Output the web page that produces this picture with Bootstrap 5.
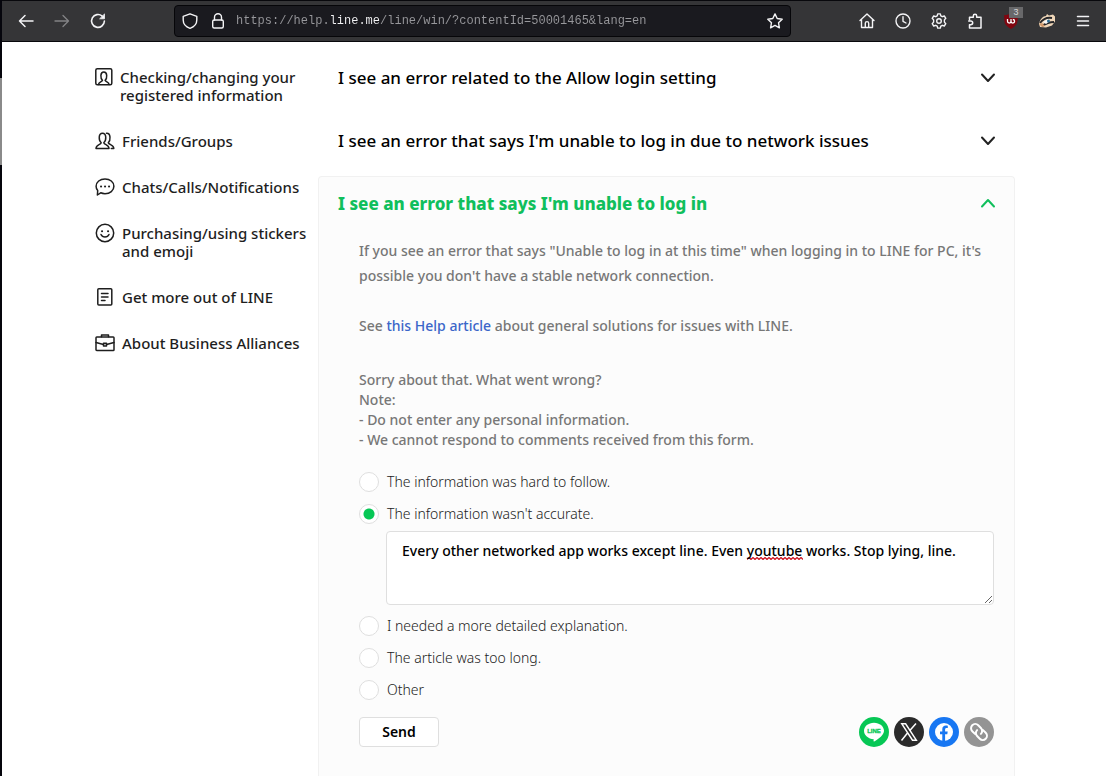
<!DOCTYPE html>
<html lang="en">
<head>
<meta charset="utf-8">
<meta name="viewport" content="width=device-width, initial-scale=1">
<title>LINE Help Center</title>
<link href="https://cdn.jsdelivr.net/npm/bootstrap@5.3.0/dist/css/bootstrap.min.css" rel="stylesheet">
<style>
  body { font-family: "Noto Sans", sans-serif; font-weight: 500; font-size: 14px; color: #1e1e1e; background: #fff; overflow: hidden; }
  button, a, input, textarea { font-family: inherit; }
  svg { display: block; }
  .line-svg { fill: none; stroke: currentColor; stroke-linecap: round; stroke-linejoin: round; }

  .desk-edge { width: 2px; background: linear-gradient(#05050c 78px, #8a8a8a 78px 165px, #05050c 165px); }

  /* Browser toolbar */
  .toolbar { height: 42px; padding: 0 5px 0 6px; background: #353537; border-top: 1px solid #08080c; border-bottom: 1px solid #08080c; color: #f4f4f6; }
  .tool { width: 36px; height: 32px; padding: 0; border: 0; background: none; color: inherit; display: grid; place-items: center; position: relative; }
  .tool:disabled { color: #838385; }
  .tool-star { width: 30px; }
  .urlbar { height: 32px; margin: 0 58px; padding-left: 7px; background: #1a1a1f; border: 1px solid #060609; border-radius: 4px; }
  .lock { margin: 0 10px 0 12px; }
  .url-box { border: 0; outline: 0; padding: 0; font: 400 12px/20px "Liberation Mono", monospace; color: transparent;
    background: linear-gradient(90deg, #98989c 13ch, #f4f4f6 13ch 20ch, #98989c 20ch); -webkit-background-clip: text; background-clip: text; }
  .count { position: absolute; top: 2px; right: 6px; width: 14px; height: 11px; background: #68686a; color: #d8d8da; font: 400 9px/11px "Liberation Sans", sans-serif; }

  /* Page */
  .page-wrap { max-width: 922px; }
  .side { width: 225px; padding-top: 26px; gap: 28px; font-size: 15px; line-height: 18px; }
  .side a { color: inherit; text-decoration: none; gap: 7px; padding-left: 2px; padding-right: 8px; }
  .side svg { flex: none; }
  .faq { padding-top: 4px; min-width: 0; }
  .faq-head { width: 100%; border: 0; background: none; padding: 0 18px 0 20px; height: 63px; font-size: 17px; line-height: 24px; font-weight: 500; color: #000; text-align: left; }
  .faq-head svg { color: #222; }
  .faq-open { margin-top: 4px; background: #fcfcfc; border: 1px solid #f1f1f1; border-bottom: 0; border-radius: 4px 4px 0 0; min-height: 600px; }
  .faq-open .faq-head { height: 53px; font-weight: 800; color: #10bf5c; padding-left: 19px; padding-right: 17px; }
  .faq-open .faq-head svg { color: #10bf5c; }
  .faq-body { padding: 8px 20px 30px 40px; color: #777; }
  .faq-body p { line-height: 25px; margin-bottom: 25px; }
  .faq-body p a { color: #3b66c9; text-decoration: none; }
  .note { line-height: 20px; margin: 32px 0 22px; }
  .choice { gap: 8px; height: 20px; margin-bottom: 12px; }
  .choice label { font-weight: 300; line-height: 20px; color: #222; }
  .choice input { appearance: none; width: 20px; height: 20px; margin: 0; border: 1px solid #dfdfdf; border-radius: 50%; background: #fff; }
  .choice input:checked { background: radial-gradient(circle, #06c755 5px, #fff 6px); }
  .reply { display: block; width: calc(100% - 27px); height: 74px; margin: -5px 0 11px 27px; padding: 9px 15px; border: 1px solid #dfdfdf; border-radius: 4px; outline: 0; font-weight: 500; line-height: 20px; color: #000; background-color: #fff;
    background-repeat: no-repeat; background-size: 56px 3px; background-position: 360px 25px;
    background-image: url("data:image/svg+xml,%3Csvg xmlns='http://www.w3.org/2000/svg' width='56' height='3'%3E%3Cpath d='M0 2.5l2-2 2 2 2-2 2 2 2-2 2 2 2-2 2 2 2-2 2 2 2-2 2 2 2-2 2 2 2-2 2 2 2-2 2 2 2-2 2 2 2-2 2 2 2-2 2 2 2-2 2 2 2-2 2 2' fill='none' stroke='%23d01c28' stroke-width='1.3'/%3E%3C/svg%3E"); }
  .form-end { margin-top: 17px; }
  .share { gap: 5px; }
  .send { width: 80px; height: 30px; border: 1px solid #dfdfdf; border-radius: 4px; background: #fff; color: #000; font-weight: 600; line-height: 20px; padding: 0; }
</style>
</head>
<body class="d-flex vh-100">
<div class="desk-edge flex-shrink-0"></div>
<div class="flex-fill">
  <header class="toolbar d-flex align-items-center">
    <button class="tool" aria-label="Back"><svg class="line-svg" width="16" height="16" stroke-width="1.5"><path d="M15 8H1.5M7 2.5 1.5 8 7 13.500"/></svg></button>
    <button class="tool" aria-label="Forward" disabled><svg class="line-svg" width="16" height="16" stroke-width="1.3"><path d="M1 8h13.500M9 2.500 14.500 8 9 13.500"/></svg></button>
    <button class="tool" aria-label="Reload"><svg class="line-svg" width="16" height="16" stroke-width="1.6"><path d="M12.200 3.100A6.400 6.400 0 1 0 14.400 8"/><path d="M14.500 1.300v4.500H10z" fill="currentColor" stroke-width=".8"/></svg></button>
    <div class="urlbar d-flex align-items-center flex-fill">
      <svg class="line-svg" width="16" height="16" stroke-width="1.400"><path d="M8 .8 1.200 3.300V7c0 4.200 3 7 6.800 8.300C11.800 14 14.800 11.200 14.800 7V3.300z"/></svg>
      <svg class="line-svg lock" width="16" height="16" stroke-width="1.400"><rect x="2.700" y="7" width="10.600" height="8" rx="1.500"/><path d="M4.500 7V4.300a3.500 3.500 0 0 1 7 0V7"/></svg>
      <input class="url-box flex-fill" type="text" aria-label="Address" value="https://help.line.me/line/win/?contentId=50001465&amp;lang=en">
      <button class="tool tool-star" aria-label="Bookmark this page"><svg class="line-svg" width="16" height="16" stroke-width="1.400"><path d="m8 .9 2.200 4.600 5 .7-3.700 3.500.9 5.100L8 12.400l-4.400 2.400.9-5.100L.8 6.200l5-.7z"/></svg></button>
    </div>
    <button class="tool" aria-label="Home"><svg class="line-svg" width="16" height="16" stroke-width="1.400"><path d="M1 7.500 8 1l7 6.500M2.500 6.500v8h11v-8M6.300 14.300v-4a1.700 1.700 0 0 1 3.400 0v4"/></svg></button>
    <button class="tool" aria-label="History"><svg class="line-svg" width="16" height="16" stroke-width="1.400"><circle cx="8" cy="8" r="7"/><path d="M8 3.800V8.300l3 1.700"/></svg></button>
    <button class="tool" aria-label="Settings"><svg class="line-svg" width="16" height="16" stroke-width="1.400"><path d="M6.700.9h2.600l.5 2 1.500.8 2-.7 1.500 2.300-1.400 1.600v2.200l1.400 1.600-1.500 2.300-2-.7-1.500.8-.5 2H6.700l-.5-2-1.500-.8-2 .7-1.500-2.300 1.400-1.600V6.900L1.200 5.300 2.700 3l2 .7 1.500-.8z"/><circle cx="8" cy="8" r="2.300"/></svg></button>
    <button class="tool" aria-label="Extensions"><svg class="line-svg" width="16" height="16" stroke-width="1.500"><path d="M2.500 6.500V4.300h3.800V3a1.700 1.700 0 0 1 3.400 0v1.300H14V15H2.500v-3.300h1.300a1.900 1.900 0 0 0 0-3.800H1.700"/></svg></button>
    <button class="tool" aria-label="uBlock Origin, 3 blocked"><svg width="16" height="16"><path d="M8 0C5.500 1.800 3.500 2 1.200 2c0 7-.2 10 6.800 14 7-4 6.800-7 6.800-14C12.500 2 10.500 1.800 8 0z" fill="#800610"/><path d="M4.500 6v2.300a1.700 1.700 0 0 0 3.500 0V6M8 8.300a1.800 1.800 0 1 0 1.800-1.800" fill="none" stroke="#fff" stroke-width="1.300"/></svg><span class="count">3</span></button>
    <button class="tool" aria-label="Privacy Badger"><svg width="18" height="16"><path d="M1 11C2 6 5 3 8 3l1-2 2 1.500 4-1 2 2v5l-3 4-6 2-6-.5z" fill="#efd6b8"/><path d="M2 10c3-4 7-6 12-5M4 13c3-2 6-4 12-4" fill="none" stroke="#252528" stroke-width="1.800"/><path d="M5 9l5-3 2 2-4 3z" fill="#f9f9f9"/><circle cx="10.500" cy="8" r="1.500" fill="#2b6b91"/><path d="M1 11l3 3 3-1-3-3z" fill="#d29a6c"/></svg></button>
    <button class="tool" aria-label="Open menu"><svg class="line-svg" width="16" height="16" stroke-width="1.500"><path d="M2.500 3.500h11M2.500 8h11M2.500 12.500h11"/></svg></button>
  </header>

  <main class="page-wrap mx-auto d-flex">
    <nav class="side d-flex flex-column flex-shrink-0" aria-label="Help categories">
      <a class="d-flex" href="#"><svg class="line-svg" width="18" height="18" stroke-width="1.500"><rect x=".8" y=".8" width="16" height="16" rx="1.500"/><path d="M3.500 16.500c0-2.500 3.500-2.500 4-4.200C5.300 10.500 5 4 8.800 4s3.500 6.500 1.300 8.300c.5 1.700 4 1.700 4 4.200"/></svg><span>Checking/changing your registered information</span></a>
      <a class="d-flex" href="#"><svg class="line-svg" width="20" height="18" stroke-width="1.500"><path d="M1 16.500c0-4 4.500-3.500 5.200-5.700C3.500 8.500 3.300 1.200 7.500 1.200s4 7.300 1.300 9.600c.7 2.200 5.200 1.700 5.200 5.700zM11.500 1.300c4.500-.3 4.200 7.200 1.800 9.500.6 2.200 5.500 1.700 5.500 5.700h-2.500"/></svg><span>Friends/Groups</span></a>
      <a class="d-flex" href="#"><svg class="line-svg" width="20" height="18" stroke-width="1.500"><path d="M10 .9c5 0 8.900 3.200 8.900 7.400s-3.900 7.400-8.900 7.400c-1.600 0-3-.3-4.300-.9L2.400 17l.3-4.400A6.600 6.600 0 0 1 1.100 8.300C1.100 4.100 5 .9 10 .9z"/><path d="M6 8.500h.1M10 8.500h.1M14 8.500h.1" stroke-width="2"/></svg><span>Chats/Calls/Notifications</span></a>
      <a class="d-flex" href="#"><svg class="line-svg" width="20" height="18" overflow="visible" stroke-width="1.500"><circle cx="10" cy="9" r="8.700"/><path d="M6 10.500c1.500 3.300 6.500 3.300 8 0"/><path d="M7 7.200h.1M13 7.200h.1" stroke-width="2"/></svg><span>Purchasing/using stickers and emoji</span></a>
      <a class="d-flex" href="#"><svg class="line-svg" width="20" height="18" stroke-width="1.500"><rect x="2.800" y=".8" width="14" height="16.200" rx="1"/><path d="M6.500 5.500h6.500M6.500 9h6.500M6.500 12.500h3.500"/></svg><span>Get more out of LINE</span></a>
      <a class="d-flex" href="#"><svg class="line-svg" width="20" height="18" stroke-width="1.500"><rect x="1" y="3" width="18" height="13.500" rx=".8"/><path d="M6.500 2.800V1h7v1.800M1 8.500l7.500 2M19 8.500l-7.500 2"/><rect x="8.500" y="9.300" width="3" height="2.600"/></svg><span>About Business Alliances</span></a>
    </nav>

    <section class="faq flex-fill">
      <button class="faq-head d-flex align-items-center justify-content-between" aria-expanded="false">I see an error related to the Allow login setting<svg class="line-svg" width="18" height="18" stroke-width="2"><path d="m3 5.500 6 6.500 6-6.500"/></svg></button>
      <button class="faq-head d-flex align-items-center justify-content-between" aria-expanded="false">I see an error that says I'm unable to log in due to network issues<svg class="line-svg" width="18" height="18" stroke-width="2"><path d="m3 5.500 6 6.500 6-6.500"/></svg></button>
      <article class="faq-open">
        <button class="faq-head d-flex align-items-center justify-content-between" aria-expanded="true">I see an error that says I'm unable to log in<svg class="line-svg" width="18" height="18" stroke-width="2"><path d="m3 11.500 6-6.500 6 6.500"/></svg></button>
        <div class="faq-body">
          <p>If you see an error that says "Unable to log in at this time" when logging in to LINE for PC, it's possible you don't have a stable network connection.</p>
          <p>See <a href="#">this Help article</a> about general solutions for issues with LINE.</p>
          <form>
            <div class="note">Sorry about that. What went wrong?<br>Note:<br>- Do not enter any personal information.<br>- We cannot respond to comments received from this form.</div>
            <div class="choice d-flex"><input type="radio" name="why" id="why1"><label for="why1">The information was hard to follow.</label></div>
            <div class="choice d-flex"><input type="radio" name="why" id="why2" checked><label for="why2">The information wasn't accurate.</label></div>
            <textarea class="reply" aria-label="Details" spellcheck="false">Every other networked app works except line. Even youtube works. Stop lying, line.</textarea>
            <div class="choice d-flex"><input type="radio" name="why" id="why3"><label for="why3">I needed a more detailed explanation.</label></div>
            <div class="choice d-flex"><input type="radio" name="why" id="why4"><label for="why4">The article was too long.</label></div>
            <div class="choice d-flex"><input type="radio" name="why" id="why5"><label for="why5">Other</label></div>
            <div class="form-end d-flex align-items-center justify-content-between">
              <button class="send" type="button">Send</button>
              <div class="share d-flex">
                <a href="#" aria-label="Share on LINE"><svg width="30" height="30"><circle cx="15" cy="15" r="15" fill="#06c755"/><path d="M15 5.700c5.600 0 10 3.600 10 8.100 0 4.300-5.200 8-9.800 10.700-.9.500-.6-1.100-.5-2.200C9.200 22 5 18.300 5 13.800c0-4.500 4.400-8.100 10-8.100z" fill="#fff"/><text x="15" y="16" text-anchor="middle" font-family="Liberation Sans, sans-serif" font-weight="700" font-size="6" fill="#06c755" stroke="#06c755" stroke-width=".3">LINE</text></svg></a>
                <a href="#" aria-label="Share on X"><svg width="30" height="30"><circle cx="15" cy="15" r="15" fill="#2b2b2b"/><path d="M7.800 6.800h3.800l10.700 16.400h-3.800zM22 6.500l-6.600 7.400M13.500 16 7.500 23.500" fill="none" stroke="#fff" stroke-width="1.500"/></svg></a>
                <a href="#" aria-label="Share on Facebook"><svg width="30" height="30"><circle cx="15" cy="15" r="15" fill="#1877f2"/><circle cx="15" cy="15" r="9" fill="#fff"/><path d="M13.300 24.500v-7.200H11v-2.800h2.300v-2.200c0-2.400 1.400-3.700 3.600-3.700.9 0 1.900.2 1.900.2v2.300h-1.200c-1.100 0-1.500.7-1.500 1.400v2h2.600l-.4 2.800h-2.200v7.200z" fill="#1877f2"/></svg></a>
                <a href="#" aria-label="Copy link"><svg width="30" height="30"><circle cx="15" cy="15" r="15" fill="#949494"/><g fill="none" stroke="#fff" stroke-width="2" stroke-linecap="round" transform="rotate(45 15 15)"><path d="M13.500 19.200h-3.800a4.200 4.200 0 0 1 0-8.400h3.800a4.200 4.200 0 0 1 4.200 4.200M16.500 10.800h3.800a4.200 4.200 0 0 1 0 8.400h-3.800a4.200 4.200 0 0 1-4.200-4.200"/></g></svg></a>
              </div>
            </div>
          </form>
        </div>
      </article>
    </section>
  </main>
</div>
<script src="https://cdn.jsdelivr.net/npm/bootstrap@5.3.0/dist/js/bootstrap.bundle.min.js"></script>
</body>
</html>
